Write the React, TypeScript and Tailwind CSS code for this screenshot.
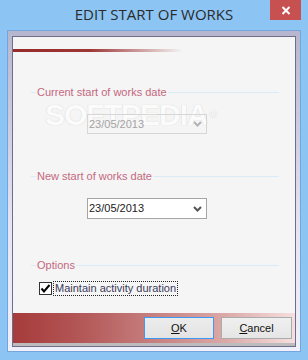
import React from "react";

const ui = { fontFamily: '"Liberation Sans", Arial, sans-serif' };

function GroupHeader({ text }: { text: string }) {
  return (
    <div className="flex items-center h-[13px] ml-[18px] mr-[16px]">
      <div className="w-[5px] h-px bg-[#dce9f6]" />
      <span className="pl-[1px] pr-[1px] text-[11px] leading-[13px] text-[#c4687f] whitespace-nowrap">{text}</span>
      <div className="flex-1 h-px bg-[#dce9f6]" />
    </div>
  );
}

function Chevron({ color }: { color: string }) {
  return (
    <svg width="9" height="6" viewBox="0 0 9 6">
      <path d="M1 1 L4.5 4.5 L8 1" stroke={color} strokeWidth="2" fill="none" />
    </svg>
  );
}

export default function App() {
  return (
    <div className="w-[308px] h-[360px] bg-[#8cc4f4] flex flex-col overflow-hidden" style={ui}>
      <div className="relative h-[30px] flex items-center justify-center">
        <span className="text-[15px] text-[#2b2b2b] mt-[-1px]" style={{ fontFamily: '"Open Sans", "Noto Sans", sans-serif' }}>
          EDIT START OF WORKS
        </span>
        <div className="absolute right-[7px] top-0 w-[31px] h-[20px] bg-[#c75050] flex items-center justify-center">
          <svg width="10" height="9" viewBox="0 0 10 9">
            <path d="M1.5 1 L8.5 8 M8.5 1 L1.5 8" stroke="#fff" strokeWidth="2" />
          </svg>
        </div>
      </div>
      <div className="flex-1 mx-[7px] mb-[8px] border border-[#72a6dc] bg-[linear-gradient(to_bottom,#b6b6ce,#e4e4f4_60%,#f0f0fc)] pt-[5px] px-[4px] pb-[4px] flex">
        <div className="flex-1 border border-[#6e6e8a] bg-[#f5f5f5] flex flex-col relative">
          <div
            className="absolute left-[32px] top-[61px] text-[30px] leading-[34px] font-bold tracking-[-1px] text-[#fbfbfb] pointer-events-none z-0"
            style={{ fontFamily: '"Liberation Sans", Arial, sans-serif', textShadow: "0 0 1px #dadada, 0 0 1px #dadada" }}
          >
            SOFTPEDIA<span className="text-[10px] align-top ml-[2px]">®</span>
          </div>

          <div className="mt-[12px] h-[3px] w-[170px] bg-[linear-gradient(to_right,#952b2b_0%,#9f3636_45%,#f5f5f5_100%)]" />

          <div className="mt-[34px]">
            <GroupHeader text="Current start of works date" />
          </div>
          <div className="relative z-10 mt-[15px] ml-[74px] w-[120px] h-[20px] border border-[#d6d6d6] flex items-center justify-between pl-[1px] pr-[4px]">
            <span className="text-[11px] text-[#a3a3a3]">23/05/2013</span>
            <Chevron color="#b4b4b4" />
          </div>

          <div className="mt-[36px]">
            <GroupHeader text="New start of works date" />
          </div>
          <div className="mt-[15px] ml-[74px] w-[120px] h-[21px] border border-[#a5a5a5] bg-white flex items-center justify-between pl-[1px] pr-[4px]">
            <span className="text-[11px] text-[#222]">23/05/2013</span>
            <Chevron color="#555" />
          </div>

          <div className="mt-[40px]">
            <GroupHeader text="Options" />
          </div>
          <div className="mt-[9px] ml-[26px] flex items-center h-[14px]">
            <div className="w-[13px] h-[13px] border border-[#333] bg-white flex items-center justify-center">
              <svg width="11" height="11" viewBox="0 0 11 11">
                <path d="M1.5 5.5 L4 8.5 L9.5 2" stroke="#000" strokeWidth="2" fill="none" />
              </svg>
            </div>
            <span className="ml-[1px] border border-dotted border-[#222] px-[1px] h-[15px] flex items-center text-[11px] text-[#3a3a5a]">
              Maintain activity duration
            </span>
          </div>

          <div className="flex-1" />
          <div className="h-[30px] bg-[linear-gradient(to_right,#a63b3b_0%,#b45858_25%,#c78080_50%,#dba8a8_75%,#f6dfdf_100%)] flex justify-end items-start pt-[4px] pr-[3px] gap-[7px]">
            <button className="w-[70px] h-[22px] border border-[#3c9af0] bg-[linear-gradient(to_bottom,#ececec,#e3e3e3)] text-[11px] text-[#111] flex items-center justify-center">
              <span><span className="underline">O</span>K</span>
            </button>
            <button className="w-[71px] h-[22px] border border-[#acacac] bg-[linear-gradient(to_bottom,#f0f0f0,#e5e5e5)] text-[11px] text-[#111] flex items-center justify-center">
              <span><span className="underline">C</span>ancel</span>
            </button>
          </div>
          <div className="h-[3px] bg-[#bcbcbc]" />
        </div>
      </div>
    </div>
  );
}
